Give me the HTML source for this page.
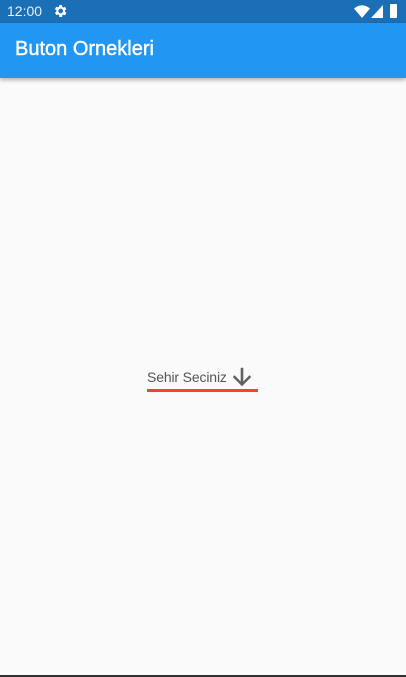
<!DOCTYPE html>
<html><head><style>
body{margin:0;width:406px;height:677px;background:#fafafa;position:relative;overflow:hidden;font-family:"Liberation Sans",sans-serif}
#sb{position:absolute;top:0;left:0;width:406px;height:23px;background:#1a6fb7;color:#fff}
#ab{position:absolute;top:23px;left:0;width:406px;height:55px;background:#2196f3;box-shadow:0 2px 4px rgba(0,0,0,.3)}
</style></head><body>
<div id="sb">
<span style="position:absolute;left:7px;top:3px;font-size:14px;color:#e8f0f8">12:00</span>
<svg style="position:absolute;left:52px;top:3px" width="16" height="16" viewBox="0 0 24 24"><path fill="#fff" d="M19.4 13a7.5 7.5 0 000-2l2.1-1.6-2-3.5-2.5 1a7 7 0 00-1.7-1L15 3h-4l-.4 2.6a7 7 0 00-1.7 1l-2.5-1-2 3.5L6.6 11a7.5 7.5 0 000 2l-2.1 1.6 2 3.5 2.5-1a7 7 0 001.7 1L11 21h4l.4-2.6a7 7 0 001.7-1l2.5 1 2-3.5zM13 15.5a3.5 3.5 0 110-7 3.5 3.5 0 010 7z"/></svg>
<svg style="position:absolute;left:354px;top:5px" width="16" height="13" viewBox="0 0 16 13"><path fill="#fff" d="M0 3.5Q8-3 16 3.5L8 13z"/></svg>
<svg style="position:absolute;left:371px;top:5px" width="12" height="13" viewBox="0 0 12 13"><path fill="#fff" d="M12 0V13H0z"/></svg>
<div style="position:absolute;left:390px;top:4px;width:7px;height:14px;background:#fff;border-radius:1px"></div>
</div>
<div id="ab"><span style="position:absolute;left:15px;top:15px;font-size:20px;color:#fff;-webkit-text-stroke:0.4px #fff">Buton Ornekleri</span></div>
<span style="position:absolute;left:147px;top:369px;font-size:14px;color:#555;letter-spacing:-0.15px">Sehir Seciniz</span>
<svg style="position:absolute;left:229px;top:364px" width="26" height="26" viewBox="0 0 24 24"><path fill="#616161" d="M20.5 12l-1.6-1.6-5.7 5.7V3.5h-2.4v12.6L5.1 10.4 3.5 12l8.5 8.5z"/></svg>
<div style="position:absolute;left:147px;top:389px;width:111px;height:3px;background:#f44336"></div>
<div style="position:absolute;left:0;top:675px;width:406px;height:2px;background:#333"></div>
</body></html>
